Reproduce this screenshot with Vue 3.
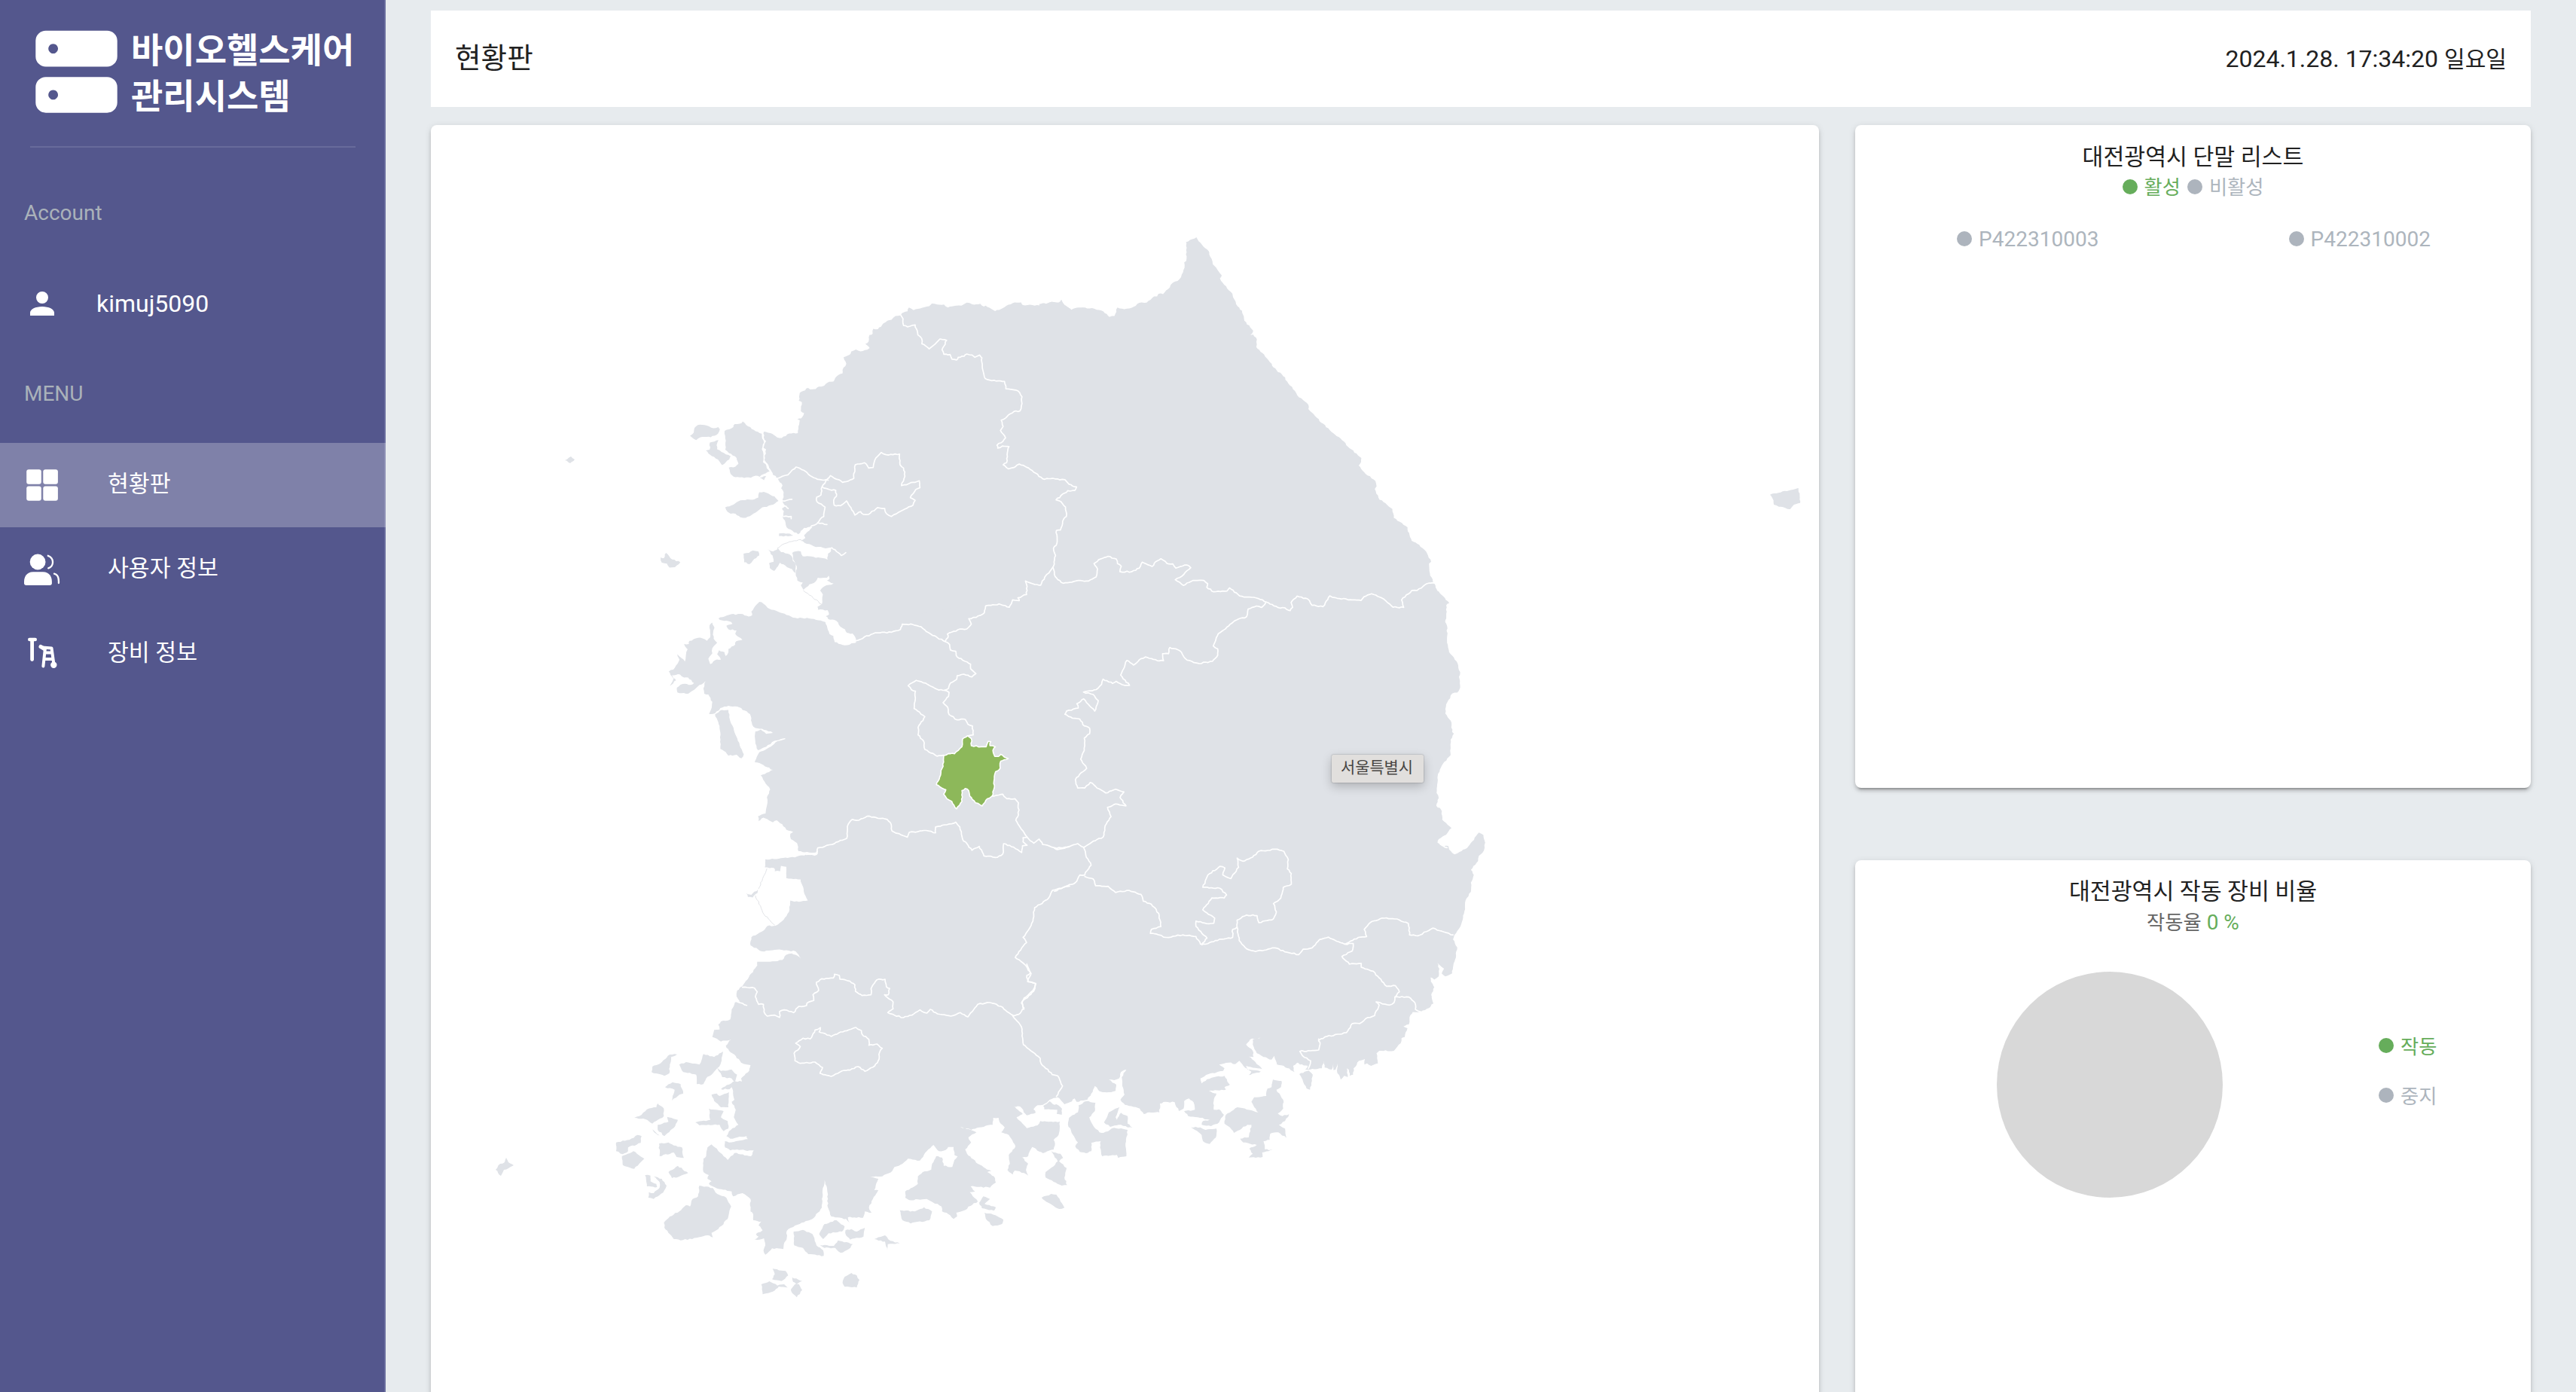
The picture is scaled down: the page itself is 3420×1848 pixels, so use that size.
<script setup>
const menu = [
  { label: '현황판', icon: 'grid', active: true },
  { label: '사용자 정보', icon: 'users', active: false },
  { label: '장비 정보', icon: 'device', active: false },
]
const devices = ['P422310003', 'P422310002']

// Each sheet holds outlines in its own local units: ox/oy is the origin, sx/sy the units per pixel.
const sheets = [
  {
    ox: 880, oy: 300, sx: 2.8, sy: 2.8,
    land: [
      '376,764 400,770 425,786 442,788 470,771 502,770 509,722 500,718 514,715 525,695 513,688 517,655 505,650 509,620 522,613 540,602 548,608 568,606 580,597 600,594 612,582 634,578 645,560 668,548 668,535 682,512 672,488 695,478 700,467 718,459 735,466 760,460 769,454 753,438 765,430 769,405 780,400 782,382 800,384 820,362 835,352 850,349 865,335 885,332 888,325 910,317 915,303 932,313 990,298 1000,288 1020,292 1045,292 1060,303 1090,296 1110,296 1130,285 1150,291 1180,289 1193,300 1200,296 1235,316 1250,312 1300,287 1332,284 1338,294 1400,295 1412,287 1425,290 1447,282 1472,286 1481,274 1494,294 1520,312 1535,306 1568,305 1568,1568 725,1568 718,1552 718,1545 715,1528 705,1515 684,1512 678,1500 660,1490 645,1468 615,1462 606,1450 618,1444 612,1428 577,1427 575,1415 592,1404 595,1370 585,1355 600,1340 635,1329 610,1318 620,1310 617,1300 610,1308 576,1308 568,1322 545,1332 523,1352 513,1335 520,1325 500,1318 494,1290 498,1265 485,1240 481,1215 494,1210 513,1210 520,1228 560,1230 604,1236 612,1240 614,1218 625,1210 628,1196 605,1198 560,1190 512,1170 530,1160 525,1150 556,1120 525,1122 503,1146 460,1120 454,1095 446,1085 450,1060 443,1050 455,1040 445,1025 449,990 440,975 445,965 428,940 420,930 410,925 400,905 390,885 378,870 384,830 374,825 384,800 375,785',
      '230,762 262,748 267,736 286,735 297,727 310,740 345,763 368,772 369,790 376,805 368,830 374,850 372,878 382,885 386,900 397,912 382,920 360,932 345,928 327,936 270,934 252,922 245,898 270,895 281,884 274,862 240,838 232,832 232,790',
      '101,780 115,768 118,750 130,740 155,740 188,752 206,748 212,756 205,772 178,785 140,785 124,796',
      '175,805 207,796 200,815 202,830 218,840 252,856 247,868 220,889 205,868 175,850 160,834 174,832',
      '232,1046 262,1036 288,1020 340,1016 355,1009 358,990 375,988 400,1000 415,1005 430,1022 410,1036 370,1046 345,1065 308,1085 288,1083 270,1070 252,1070 240,1062',
      '432,1143 465,1143 485,1151 465,1154 432,1153',
      '388,1201 410,1210 428,1198 440,1212 470,1220 478,1226 483,1245 494,1258 492,1290 480,1275 470,1272 455,1262 435,1252 428,1265 414,1282 398,1272 395,1253 412,1248 408,1225',
      '300,1218 320,1215 335,1206 355,1210 358,1225 340,1238 322,1257 302,1250',
      '-8,1232 4,1235 12,1215 28,1235 65,1250 45,1268 25,1270 15,1255 -4,1252',
      '360,935 384,930 376,945',
    ],
    border: [
      '885,332 893,345 895,370 910,375 938,368 948,405 962,418 963,438 990,457 1005,445 1030,420 1055,425 1038,460 1045,477 1068,478 1075,495 1092,498 1098,488 1120,484 1130,476 1150,480 1160,488 1178,480 1186,490 1188,530 1198,567 1215,573 1270,578 1275,605 1320,613 1335,635 1335,660 1328,687 1305,690 1280,708 1258,722 1265,745 1255,760 1274,788 1265,800 1242,815 1245,826 1262,818 1287,820 1280,850 1278,880 1265,888 1285,903 1305,898 1325,885 1360,900 1412,940 1450,938 1475,944 1495,943 1510,960 1538,970 1532,983 1505,984 1462,1018 1480,1025 1497,1045 1500,1080 1490,1090 1478,1130 1463,1132 1465,1180 1452,1198 1460,1225 1452,1265',
      '1450,1268 1435,1290 1420,1305 1405,1335 1375,1330 1348,1320 1354,1340 1352,1370 1320,1382 1325,1393 1300,1390 1288,1417 1250,1405 1220,1410 1200,1412 1195,1438 1165,1455 1137,1460 1147,1480 1130,1498 1105,1498 1058,1517 1060,1530 1050,1545 1020,1530 980,1508 960,1490 930,1482 890,1480 883,1500 850,1510 790,1512 718,1542',
      '592,970 623,928 668,953 690,948 710,938 715,888 750,880 765,900 782,898 792,862 812,842 830,850 880,848 882,888 895,900 900,930 887,965 915,958 953,947 956,973 940,980 920,1010 938,1020 930,1038 900,1052 868,1070 850,1080 832,1070 825,1050 798,1047 765,1072 745,1072 735,1062 714,1075 690,1035 683,1022 660,1040 637,1038 635,1020 645,1005 643,983 620,980 592,970',
      '425,938 465,925 495,896 530,912 555,932 575,942 615,945',
      '592,970 588,1000 572,1008 573,1025 603,1045 598,1080 585,1090 575,1105 540,1124',
      '575,1103 592,1105 610,1110',
      '628,1196 645,1210 663,1225 680,1214',
      '445,1022 460,1020 480,1016', '447,1040 458,1042 466,1050', '450,1080 477,1080 477,1088',
    ],
    hair: ['522,1355 545,1372 590,1406', '515,1166 470,1174 445,1184 425,1198'],
  },
  {
    ox: 1380, oy: 300, sx: 2.529, sy: 2.8,
    land: [
      '0,290 20,290 42,281 50,287 65,284 74,274 84,294 107,312 125,304 145,303 160,307 185,308 215,318 235,338 252,335 262,303 285,309 310,304 335,286 360,285 385,262 395,262 400,252 415,253 438,228 442,217 470,198 482,172 487,155 486,135 493,130 494,65 492,60 527,42 540,62 568,93 570,105 578,122 582,142 612,183 606,195 620,218 648,252 650,265 665,298 680,315 688,352 718,390 708,406 718,404 730,421 728,450 748,472 780,512 785,525 825,563 826,572 848,598 866,630 903,665 903,680 938,718 940,725 1028,808 1030,815 1081,862 1080,878 1072,890 1090,915 1128,948 1132,968 1126,978 1142,1018 1150,1020 1185,1052 1190,1085 1236,1120 1237,1135 1250,1170 1275,1185 1298,1210 1315,1248 1308,1255 1312,1300 1326,1328 1335,1355 1376,1402 1366,1410 1366,1450 1362,1475 1368,1510 1368,1568 0,1568',
    ],
    border: [
      '45,1268 50,1295 62,1315 80,1328 130,1318 165,1320 190,1305 195,1275 183,1255 205,1238 230,1228 258,1238 262,1255 275,1265 270,1285 310,1285 335,1272 345,1250 378,1266 390,1248 408,1237 428,1254 448,1256 458,1272 495,1260 508,1270 485,1295 478,1302 456,1315 483,1336 515,1318 552,1318 565,1330 562,1343 585,1360 630,1357 638,1345 672,1375 735,1385 762,1398 800,1418 825,1420 842,1430 850,1418 845,1400 865,1376 900,1386 915,1410 952,1415 960,1400 975,1375 1000,1384 1080,1392 1090,1378 1115,1367 1150,1383 1187,1417 1223,1418 1216,1390 1250,1355 1268,1355 1300,1330 1328,1328',
    ],
    hair: [],
  },
  {
    ox: 860, oy: 780, sx: 2.8, sy: 2.8,
    land: [
      '775,205 732,215 695,203 690,180 675,172 660,128 600,115 540,112 500,95 445,75 430,60 415,53 400,68 385,90 388,103 375,108 345,98 300,102 263,115 275,122 310,128 315,135 292,142 300,155 330,160 325,172 352,195 328,200 325,212 300,228 300,240 290,255 285,240 265,233 258,248 272,268 250,270 232,285 225,265 240,245 240,225 258,205 245,190 243,168 248,150 240,130 230,140 232,185 220,198 195,186 155,198 153,210 135,210 148,230 142,250 138,275 125,262 110,248 118,268 105,290 95,305 78,312 90,330 105,345 82,365 95,342 90,326 120,323 135,335 150,335 172,355 160,362 130,358 108,372 110,390 150,395 178,375 215,348 207,375 210,395 225,398 240,425 238,445 228,470 250,468 270,448 300,440 340,445 380,470 388,510 400,522 425,525 465,540 440,544 420,528 400,535 400,580 410,605 440,592 470,570 510,560 512,563 475,575 450,595 415,612 405,630 398,650 415,652 465,678 420,698 455,750 443,780 445,800 438,840 415,848 410,850 412,868 430,855 465,873 480,865 500,880 515,900 540,908 530,915 532,935 555,950 560,980 600,985 625,985 632,975 632,990 620,997 590,992 555,1000 520,1005 437,1010 435,1040 470,1043 472,1055 492,1055 495,1035 515,1038 515,1080 568,1085 580,1130 595,1163 545,1168 530,1163 525,1205 505,1235 475,1257 445,1258 430,1275 385,1300 382,1330 425,1352 480,1346 550,1352 570,1380 555,1368 535,1360 515,1365 500,1385 455,1392 410,1405 405,1408 355,1478 332,1500 330,1520 345,1545 330,1542 318,1560 316,1568 1568,1568 1568,0 1000,100',
      '250,472 275,455 300,455 305,490 320,530 335,570 345,595 357,620 348,635 330,622 300,625 290,612 270,600 268,530 262,500',
      '365,1135 385,1142 410,1122 408,1135 390,1152 372,1150',
    ],
    border: [
      '1106,201 1122,212 1125,232 1145,237 1150,258 1200,285 1200,302 1220,320 1205,332 1175,322 1150,328 1148,342 1125,355 1118,375 1105,382',
      '1105,382 1120,390 1118,405 1098,428 1115,445 1120,472 1150,492 1180,490 1190,508 1207,515 1210,548 1190,552',
      '1105,382 1075,378 1040,360 998,345 968,365 980,380 995,385 990,450 1030,480 1005,520 1005,548 1025,570 1030,602 1075,627 1100,623',
      '590,992 628,990 632,968 685,955 740,932 745,880 760,862 785,865 815,850 890,862 905,880 908,905 965,928 972,910 1035,903 1070,912 1070,890 1130,878 1145,872 1160,890 1170,935 1205,977 1232,962 1250,998 1300,1003 1320,990 1323,952 1360,965 1390,985 1393,960 1410,958 1395,945 1395,930 1410,928',
      '1280,775 1320,768 1335,785 1365,785 1378,800 1378,845 1368,865 1395,905 1412,930 1435,950 1455,935 1468,955 1520,970 1568,962',
      '1568,1110 1530,1118 1505,1125 1485,1160 1438,1190 1432,1240 1410,1280 1395,1300 1408,1320 1390,1340 1366,1375 1400,1400 1425,1435 1412,1465 1442,1472 1435,1500 1392,1540 1398,1568',
    ],
    hair: ['443,1045 412,1120', '400,1145 432,1215 472,1255'],
  },
  {
    ox: 1400, oy: 780, sx: 2.529, sy: 2.45,
    land: [
      '0,0 1280,0 1285,15 1325,50 1313,56 1315,90 1310,110 1318,125 1318,180 1325,210 1350,240 1362,275 1358,290 1362,325 1352,342 1335,345 1315,380 1312,410 1333,440 1335,470 1341,475 1330,495 1330,545 1300,580 1288,605 1283,668 1290,685 1282,710 1298,722 1302,755 1333,782 1318,800 1310,806 1290,818 1286,830 1295,838 1322,840 1325,852 1343,868 1360,860 1385,848 1425,797 1440,805 1446,830 1442,855 1425,872 1422,890 1398,918 1408,935 1398,960 1398,990 1380,1018 1375,1060 1368,1088 1358,1110 1343,1130 1338,1145 1352,1170 1345,1210 1338,1235 1335,1255 1312,1265 1300,1255 1308,1240 1298,1232 1285,1220 1292,1240 1290,1265 1275,1275 1250,1258 1270,1290 1275,1300 1265,1325 1272,1353 1245,1362 1228,1380 1195,1382 1190,1400 0,1400',
    ],
    border: [
      '710,48 695,65 678,60 650,70 645,95 605,108 585,125 550,150 533,190 548,200 548,220 530,240 485,247 445,236 420,205 387,195 383,215 363,215 366,238 345,238 305,226 285,235 265,252 243,237 222,285 252,318 235,318 207,305 195,312 163,298 158,315 140,332 97,340 130,348 147,368 135,402 118,385 98,362 75,378 80,392 40,402 35,412 60,425 85,428 100,450 118,458 118,475 100,490 100,530 88,558 108,588 90,602 70,625 78,652 102,652 120,634 150,655 172,668 205,656 233,665 220,683 240,710 205,704 178,715 190,745 170,775 163,812 130,825 98,845',
      '98,845 78,833 40,845 10,852 0,848',
      '98,845 105,870 123,903 105,925 102,935 85,935 70,960 30,975 0,988',
      '102,940 130,948 138,970 180,972 205,992 250,985 290,998 298,1020 325,1030 350,1060 357,1103 325,1112 322,1125 350,1130 375,1138 430,1130 475,1135 490,1160 515,1158 540,1148 598,1138 598,1112 613,1105 620,1148 645,1175 675,1184 740,1172 780,1186 820,1194 835,1176 865,1172 890,1145 920,1137 975,1160 1020,1138 1048,1135 1040,1112 1060,1090 1100,1075 1150,1078 1188,1093 1192,1130 1220,1133 1270,1108 1338,1130',
      '613,1105 613,1082 645,1065 680,1067 686,1090 735,1078 745,1055 735,1028 760,1010 768,975 795,965 795,930 782,915 785,885 770,858 740,851 685,858 665,877 632,890 613,880 618,910 592,947 565,935 572,912 555,907 515,935 498,975 555,978 578,1000 570,1010 528,1010 498,1048 538,1075 535,1092 510,1093 475,1085 475,1102 512,1140 495,1162',
      '975,1160 1003,1158 1000,1182 965,1200 990,1225 1030,1223 1030,1235 1070,1248 1115,1297 1145,1295 1158,1315 1143,1332 1140,1350 1125,1358 1080,1348 1090,1358 1075,1392 1045,1402 1025,1418 1000,1418 980,1448 915,1460 888,1472',
      '1143,1332 1190,1332 1210,1350 1212,1372 1230,1380',
      '1300,838 1318,846',
    ],
    hair: [],
  },
  {
    ox: 800, oy: 1280, sx: 2.8, sy: 3,
    land: [
      '575,-10 575,5 540,60 520,90 500,105 500,130 515,150 492,152 480,180 475,220 440,228 430,240 435,260 415,262 408,290 440,308 478,300 458,325 470,345 490,360 515,392 550,402 545,425 515,455 518,467 485,468 440,498 472,498 480,490 490,540 480,548 495,580 488,610 505,640 470,665 460,685 475,695 535,685 540,697 470,710 455,705 455,730 475,742 500,738 530,742 562,742 552,765 490,752 465,780 450,765 425,735 405,718 390,730 385,765 375,775 375,828 395,840 390,855 405,865 395,875 425,893 480,905 485,925 520,912 550,935 550,985 560,995 560,1020 590,1025 580,1040 595,1060 570,1075 580,1085 558,1100 600,1092 605,1120 598,1140 605,1157 630,1132 672,1135 675,1110 685,1090 685,1062 700,1050 740,1030 780,1015 800,990 815,970 818,900 825,860 835,900 838,970 850,1005 905,1015 918,1030 912,1008 968,1010 975,985 1000,990 990,970 1005,935 1025,900 1010,900 1025,855 990,845 1040,845 1070,830 1085,808 1115,795 1135,775 1180,782 1205,745 1230,720 1250,745 1275,740 1285,728 1305,728 1308,760 1320,765 1308,780 1300,808 1268,803 1262,770 1240,765 1225,795 1222,818 1190,828 1172,845 1172,875 1125,905 1125,930 1140,940 1205,935 1260,965 1262,985 1285,995 1305,1015 1318,1005 1315,990 1355,975 1360,965 1395,945 1365,908 1385,905 1368,885 1440,890 1462,870 1455,845 1430,828 1445,825 1395,795 1355,755 1348,738 1370,710 1360,690 1390,670 1330,648 1370,660 1400,650 1450,640 1452,612 1472,612 1480,600 1530,560 1568,500 1568,-10',
      '360,882 410,892 420,910 460,930 478,965 465,1015 430,1055 405,1070 410,1088 390,1080 350,1090 290,1100 265,1095 230,1050 228,1030 250,1005 285,985 310,960 325,965 335,935 355,925',
      '710,1065 745,1058 780,1075 795,1120 820,1140 822,1162 765,1155 745,1130 712,1120',
      '805,1075 825,1035 870,1020 900,1045 890,1065 840,1072 820,1095',
      '903,1060 925,1055 945,1065 975,1050 970,1085 920,1097 905,1080',
      '808,1118 860,1122 875,1100 930,1115 915,1135 885,1150 865,1130 825,1130',
      '1010,1095 1050,1080 1070,1102 1105,1112 1060,1115 1058,1140 1050,1105',
      '1105,980 1160,985 1195,968 1225,985 1215,1020 1145,1033 1115,1020',
      '1400,950 1415,925 1440,935 1420,955 1462,968 1455,982 1410,972',
      '1420,990 1460,1000 1490,1018 1485,1035 1450,1043 1425,1015',
      '632,1213 680,1222 690,1240 665,1262 630,1255 640,1235',
      '590,1275 620,1263 650,1280 675,1275 688,1288 655,1284 640,1300 595,1315',
      '705,1248 742,1262 720,1275 708,1265',
      '700,1295 715,1275 730,1275 742,1298 722,1327 705,1310',
      '892,1270 900,1245 925,1230 945,1240 955,1258 945,1288 900,1285',
      '182,430 185,408 215,395 250,360 285,358 255,370 250,400 248,435 230,445',
      '285,400 310,390 360,400 375,358 415,370 448,348 438,400 410,435 385,455 375,478 350,478 348,440 300,430',
      '425,410 440,425 480,420 500,440 492,470 480,455 445,450',
      '232,490 260,470 290,478 300,515 280,525 258,543 268,500',
      '405,520 425,515 435,525 470,510 468,570 440,570 415,545',
      '395,575 450,585 440,610 465,625 468,655 450,665 435,640 360,642 345,630 400,620',
      '118,612 145,600 165,578 200,570 205,555 228,575 228,605 185,635 160,618',
      '205,640 245,628 240,608 280,620 270,645 230,685 205,660',
      '185,658 212,682 200,676',
      '50,710 100,700 130,680 145,685 142,712 95,730 95,745 75,757 50,745',
      '72,765 115,745 155,775 118,815 75,800',
      '210,715 245,710 265,722 295,730 302,772 275,768 265,750 212,765',
      '245,828 280,803 318,832 280,848 258,852',
      '158,840 178,842 178,865 200,875 203,888 165,885',
      '190,845 220,855 238,882 225,910 190,935 170,930 172,908 190,912 212,890 212,868',
    ],
    border: [
      '520,92 565,95 575,110 568,130 580,160 598,160 600,190 612,207 640,203 658,212 658,188 675,182 710,193 730,168 758,165 760,155 785,145 782,122 803,105 795,72 815,58 858,55 862,40 880,45 882,60 920,68 938,82 940,108 965,125 998,122 998,98 1020,62 1050,60 1055,90 1067,97 1062,122 1048,122 1080,150 1080,178 1060,193 1085,203 1118,213 1150,203 1180,182 1205,195 1218,180 1245,198 1295,207 1330,193 1358,210 1395,160 1440,153 1480,168 1525,203',
      '810,253 805,270 850,288 885,270 915,262 942,252 962,265 965,280 990,300 990,323 1020,318 1040,335 1030,350 1028,378 1012,405 975,427 950,408 920,422 890,425 850,447 820,440 808,435 818,412 790,390 735,395 715,385 712,355 735,328 718,315 745,295 772,298 790,262 810,253',
      '500,150 520,156 536,164',
    ],
    hair: [],
  },
  {
    ox: 1340, oy: 1280, sx: 2.8, sy: 3,
    land: [
      '0,0 1568,0 1568,165 1560,175 1530,190 1500,190 1488,210 1485,240 1465,248 1480,255 1470,290 1458,295 1455,315 1430,345 1375,345 1365,355 1370,395 1345,405 1330,395 1320,400 1322,378 1300,385 1280,415 1278,440 1265,445 1262,420 1255,415 1258,450 1245,445 1232,460 1218,425 1220,395 1213,420 1205,422 1205,395 1198,420 1172,412 1170,385 1162,415 1100,420 1110,405 1080,400 1070,392 1055,405 1060,430 1020,405 995,400 985,365 975,380 945,370 920,355 905,320 905,300 935,292 895,300 880,320 905,345 908,370 890,368 915,390 940,418 880,405 885,420 935,428 890,442 900,428 870,405 855,385 840,398 815,392 780,400 800,415 795,425 740,438 710,455 715,475 735,458 770,448 800,445 820,480 800,490 805,500 765,502 742,505 770,515 760,545 760,580 780,578 798,600 780,630 750,645 715,640 720,625 745,620 700,610 665,605 650,585 690,580 685,550 668,535 650,545 648,575 630,585 615,550 580,548 560,555 558,590 520,590 500,597 485,575 430,560 413,540 428,520 420,485 418,450 435,420 415,430 408,455 390,462 370,460 398,480 395,505 370,510 340,508 330,500 318,485 305,515 290,540 250,548 243,535 225,550 205,558 180,530 150,540 125,560 105,562 90,578 98,592 65,602 40,567 0,567',
      '-60,540 0,540 20,567 50,597 27,610 65,653 105,642 115,625 188,627 183,680 165,700 170,715 165,738 125,753 85,728 70,765 48,770 70,795 62,820 72,843 55,832 20,822 13,838 -7,820 2,795 -2,760 23,725 -2,680 -30,670 -17,650 -32,635 -40,612 -60,612',
      '126,565 150,546 160,556 182,562 196,576 195,600 176,596 178,580 130,578',
      '258,562 285,546 320,552 318,585 297,610 310,640 335,670 350,672 390,652 440,660 432,725 435,765 405,772 400,760 345,765 337,730 340,705 305,712 305,745 285,753 262,748 245,725 255,710 240,685 218,640 222,612 255,590',
      '352,630 370,590 410,570 395,610 400,620 415,592 440,605 440,635 458,650 440,650 415,640 375,648',
      '980,460 1012,465 1010,490 993,500 1018,540 1018,575 998,595 1015,605 1040,598 1025,625 1002,640 1025,655 1030,692 1000,670 970,675 968,700 945,705 950,738 980,740 940,750 942,768 890,770 905,755 892,735 920,720 870,710 858,695 890,690 900,640 885,640 835,672 820,650 800,635 805,600 848,570 900,582 925,590 900,548 910,530 955,525 960,495 975,490',
      '675,650 710,650 730,660 770,655 768,690 745,716 720,705 715,680 690,660',
      '1078,438 1098,428 1113,424 1128,440 1125,465 1118,500 1105,495 1090,460',
      '155,745 190,755 200,772 185,785 213,812 205,850 215,880 195,882 135,850 135,828 165,805 180,785',
      '120,930 155,915 175,918 190,945 205,970 185,975 145,950',
    ],
    border: [
      '65,0 78,35 65,45 70,70 98,78 88,105 55,135 45,155 55,175 35,200 12,205 45,250 52,320 80,345 115,375 118,395 160,440 180,445 198,485 175,527',
      '1150,298 1155,320 1150,342 1120,345 1080,347 1090,365 1120,385 1112,415',
    ],
    hair: [],
  },
  {
    ox: 2320, oy: 620, sx: 3, sy: 3,
    land: ['90,110 115,105 140,97 165,94 190,88 203,84 203,92 208,105 208,130 210,143 185,150 170,168 150,163 125,158 105,150 100,125'],
    border: [],
    hair: [],
  },
  {
    ox: 0, oy: 0, sx: 1, sy: 1,
    land: ['658,1553 664,1545 670,1543 672,1537 675,1543 682,1547 675,1551 669,1553 665,1561', '750,611 758,606 763,610 757,615'],
    border: [],
    hair: [],
  },
]
const daejeon = '1100,625 1118,617 1140,618 1155,605 1168,592 1170,563 1188,551 1203,562 1203,588 1240,592 1258,592 1265,572 1275,573 1272,588 1292,592 1283,605 1290,628 1303,628 1312,620 1340,636 1325,640 1312,645 1310,672 1293,685 1287,720 1288,745 1280,775 1262,785 1243,812 1218,800 1197,775 1193,755 1180,747 1168,755 1168,795 1148,823 1130,795 1112,785 1100,768 1108,752 1073,733 1085,705 1090,680 1098,665'

// Adds small deterministic jogs between survey points so that outlines look natural.
function trace(text, sheet, closed) {
  const pts = text.split(' ').map((p) => {
    const [x, y] = p.split(',').map(Number)
    return [sheet.ox + x / sheet.sx, sheet.oy + y / sheet.sy]
  })
  const out = []
  const count = closed ? pts.length : pts.length - 1
  for (let i = 0; i < count; i++) {
    const a = pts[i]
    const b = pts[(i + 1) % pts.length]
    const dx = b[0] - a[0]
    const dy = b[1] - a[1]
    const len = Math.hypot(dx, dy)
    out.push(a)
    if (len < 4 || len > 60) continue
    const steps = Math.max(2, Math.round(len / 3))
    for (let k = 1; k < steps; k++) {
      const t = k / steps
      const noise = Math.sin((a[0] + dx * t) * 12.9898 + (a[1] + dy * t) * 78.233) * 43758.5453
      const off = (noise - Math.floor(noise) - 0.5) * 1.5
      out.push([a[0] + dx * t - (dy / len) * off, a[1] + dy * t + (dx / len) * off])
    }
  }
  if (!closed) out.push(pts[pts.length - 1])
  return 'M' + out.map((p) => p[0].toFixed(1) + ' ' + p[1].toFixed(1)).join('L') + (closed ? 'Z' : '')
}
const collect = (key, closed) => sheets.flatMap((s) => s[key].map((t) => trace(t, s, closed)))
const landPaths = collect('land', true)
const borderPaths = collect('border', false)
const hairPaths = collect('hair', false)
const selectedPath = trace(daejeon, sheets[2], true)
</script>

<template>
  <div class="app">
    <aside class="sidebar">
      <div class="brand">
        <svg class="brand-mark" width="110" height="110" viewBox="0 0 110 110">
          <path fill-rule="evenodd" fill="#fff" d="M14 .8H95A13.500 13.500 0 0 1 108.700 14V35A13.500 13.500 0 0 1 95 48.500H14A13.500 13.500 0 0 1 .3 35V14A13.500 13.500 0 0 1 14 .8ZM23.600 18.200a6.400 6.400 0 1 0 .01 0Z" />
          <path fill-rule="evenodd" fill="#fff" d="M14 62.200H95A13.500 13.500 0 0 1 108.700 75.700V96.300A13.500 13.500 0 0 1 95 109.700H14A13.500 13.500 0 0 1 .3 96.300V75.700A13.500 13.500 0 0 1 14 62.200ZM23.600 79.500a6.400 6.400 0 1 0 .01 0Z" />
        </svg>
        <div class="brand-name">바이오헬스케어<br />관리시스템</div>
      </div>
      <div class="divider"></div>
      <div class="subheader first">Account</div>
      <div class="account">
        <svg width="48" height="48" viewBox="0 0 24 24" fill="#fff"><path d="M12,4A4,4 0 0,1 16,8A4,4 0 0,1 12,12A4,4 0 0,1 8,8A4,4 0 0,1 12,4M12,14C16.42,14 20,15.79 20,18V20H4V18C4,15.79 7.58,14 12,14Z" /></svg>
        <span>kimuj5090</span>
      </div>
      <div class="subheader">MENU</div>
      <nav>
        <a v-for="m in menu" :key="m.label" class="item" :class="{ active: m.active }">
          <svg v-if="m.icon === 'grid'" width="48" height="48" viewBox="0 0 48 48" fill="#fff">
            <rect x="3.200" y="3.300" width="19.600" height="19.400" rx="3" />
            <rect x="25.300" y="3.300" width="19.600" height="19.400" rx="3" />
            <rect x="3.200" y="25.400" width="19.600" height="19.400" rx="3" />
            <rect x="25.300" y="25.400" width="19.600" height="19.400" rx="3" />
          </svg>
          <svg v-else-if="m.icon === 'users'" width="48" height="48" viewBox="0 0 48 48" fill="#fff">
            <circle cx="18.100" cy="14" r="10.400" />
            <path d="M0 40C0 32 5 27.300 12 27.300H25C32 27.300 36.900 32 36.900 40V42.500Q36.900 44.900 34.500 44.900H2.400Q0 44.900 0 42.500Z" />
            <path d="M31.800 5.800C39.500 8.500 40.500 19 32.200 22.400M40 29.700C44.500 30.500 46.300 35 45.900 42" fill="none" stroke="#fff" stroke-width="2.300" stroke-linecap="round" />
          </svg>
          <svg v-else width="48" height="48" viewBox="0 0 48 48" fill="none" stroke="#fff" stroke-linecap="round" stroke-linejoin="round">
            <path d="M7.300 5H14.700" stroke-width="4.600" />
            <path d="M10.600 6V31.500" stroke-width="4.800" />
            <path d="M22 14.500L27 17.500" stroke-width="5" />
            <path d="M24 15.500L36.500 16.500L39.500 38M27.800 18L25.400 40.500M28 22.500H37M27 31H38" stroke-width="4" />
            <circle cx="39.300" cy="38.800" r="2.200" stroke-width="4" />
          </svg>
          <span>{{ m.label }}</span>
        </a>
      </nav>
    </aside>

    <main class="main">
      <header class="topbar">
        <h1>현황판</h1>
        <div class="clock">2024.1.28. 17:34:20 <span class="ko">일요일</span></div>
      </header>
      <div class="board">
        <section class="card map-card">
          <svg class="map" width="1843" height="1700" viewBox="572 166 1843 1700">
            <path v-for="(d, i) in landPaths" :key="'l' + i" :d="d" fill="#dfe2e7" />
            <path v-for="(d, i) in hairPaths" :key="'h' + i" :d="d" fill="none" stroke="#e2e4e8" stroke-width="1" />
            <path v-for="(d, i) in borderPaths" :key="'b' + i" :d="d" class="border" />
            <path :d="selectedPath" fill="#8db85a" stroke="#fff" stroke-width="1.600" stroke-linejoin="round" />
          </svg>
          <div class="tooltip">서울특별시</div>
        </section>
        <div class="side">
          <section class="card list-card">
            <h2>대전광역시 단말 리스트</h2>
            <div class="legend">
              <i class="dot green"></i><span class="green-text">활성</span>
              <i class="dot second"></i><span>비활성</span>
            </div>
            <div class="devices">
              <div v-for="d in devices" :key="d" class="device"><i class="dot"></i><span>{{ d }}</span></div>
            </div>
          </section>
          <section class="card ratio-card">
            <h2>대전광역시 작동 장비 비율</h2>
            <div class="ratio"><span class="ko">작동율</span> <b>0 %</b></div>
            <div class="chart-row">
              <div class="pie"></div>
              <div class="keys">
                <div class="key green-text"><i class="dot green"></i><span>작동</span></div>
                <div class="key"><i class="dot"></i><span>중지</span></div>
              </div>
            </div>
          </section>
        </div>
      </div>
    </main>
  </div>
</template>

<style>
body { margin: 0; overflow: hidden; }
</style>

<style scoped>
.app { display: flex; width: 3420px; height: 1848px; overflow: hidden; background: #e7ebee; color: #212121; font-family: Roboto, "Noto Sans CJK KR", sans-serif; font-size: 32px; }
.app * { box-sizing: border-box; }
.sidebar { flex: none; width: 512px; height: 1848px; background: #54578d; border-right: 2px solid #686b9d; color: #fff; }
.brand { display: flex; height: 194px; padding: 40px 0 0 47px; }
.brand-mark { flex: none; }
.brand-name { margin: -7px 0 0 17px; font: 700 46px/61px "Noto Sans CJK KR", sans-serif; white-space: nowrap; }
.divider { height: 2px; margin: 0 38px 0 40px; background: #686b9b; }
.subheader { height: 120px; padding-left: 32px; line-height: 120px; font-size: 28px; color: #aab2ba; }
.subheader.first { margin-top: 27px; }
.account { display: flex; align-items: center; gap: 48px; height: 120px; padding-left: 32px; }
nav { padding-top: 5px; }
.item { display: flex; align-items: center; gap: 63px; height: 112px; padding-left: 32px; font-size: 30.300px; }
.item.active { width: 512px; background: rgba(255, 255, 255, .25); }
.item span { padding-bottom: 8px; }
.main { flex: none; width: 2848px; padding: 14px 0 0 60px; }
.topbar { display: flex; align-items: center; justify-content: space-between; height: 128px; padding: 0 32px; background: #fff; }
h1 { margin: 0; font-size: 37.600px; font-weight: 400; line-height: 60px; padding-bottom: 2px; }
.clock { padding-bottom: 4px; font-size: 32px; }
.ko { font-size: .94em; }
.board { display: flex; gap: 48px; margin-top: 24px; }
.card { background: #fff; border-radius: 8px; box-shadow: 0 6px 2px -4px rgba(0, 0, 0, .2), 0 4px 4px 0 rgba(0, 0, 0, .14), 0 2px 10px 0 rgba(0, 0, 0, .12); }
.map-card { position: relative; width: 1843px; height: 1760px; }
.map { display: block; }
.border { fill: none; stroke: #fff; stroke-width: 1.700; stroke-linejoin: round; stroke-linecap: round; }
.tooltip { position: absolute; left: 1196px; top: 836px; width: 122px; height: 37px; padding-right: 2px; line-height: 34px; text-align: center; font-size: 20.900px; color: #484644; background: #e1dfdd; border-radius: 2px; box-shadow: 0 0 2px rgba(0, 0, 0, .35), 0 5px 14px rgba(0, 0, 0, .22); }
.side { display: flex; flex-direction: column; gap: 96px; width: 897px; }
.list-card { height: 880px; padding-top: 22px; }
.ratio-card { height: 760px; padding-top: 21px; }
h2 { margin: 0; height: 42px; line-height: 42px; text-align: center; font-size: 30.300px; font-weight: 400; }
.legend { display: flex; align-items: center; justify-content: center; height: 36px; font-size: 26.300px; color: #adb5bd; }
.legend span { padding-bottom: 3px; }
.dot { flex: none; width: 20px; height: 20px; margin-right: 9px; border-radius: 50%; background: #adb4bd; }
.dot.green { background: #66ad5b; }
.dot.second { margin-left: 9px; }
.green-text { color: #66ad5b; }
.devices { display: flex; justify-content: space-around; margin-top: 31px; padding: 0 7px 0 9px; font-size: 28px; color: #adb5bd; }
.device { display: flex; align-items: center; height: 40px; }
.ratio { height: 40px; line-height: 39px; text-align: center; font-size: 28px; color: #666; }
.ratio b { font-weight: 400; color: #66ad5b; }
.chart-row { display: flex; margin: 45px 0 0 188px; }
.pie { width: 300px; height: 300px; border-radius: 50%; background: #d8d8d8; }
.keys { display: flex; flex-direction: column; gap: 26px; margin: 78px 0 0 207px; }
.key { display: flex; align-items: center; height: 40px; font-size: 26.300px; color: #adb5bd; }
.key span { padding-bottom: 2px; }
.key.green-text { color: #66ad5b; }
</style>
